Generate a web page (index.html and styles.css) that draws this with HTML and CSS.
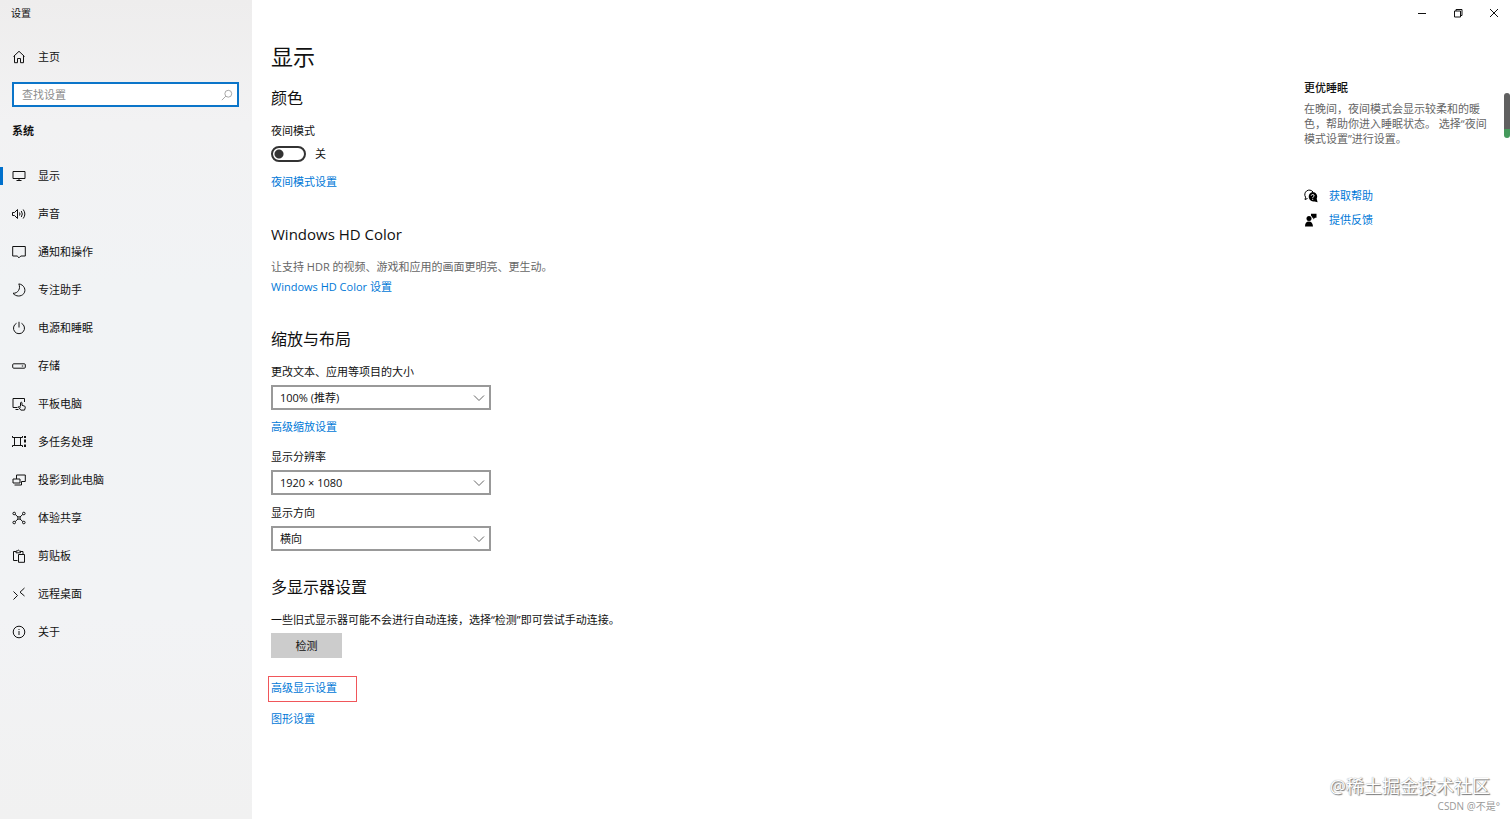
FILE: index.html
```html
<!DOCTYPE html>
<html lang="zh-CN">
<head>
  <meta charset="UTF-8" />
  <meta name="viewport" content="width=device-width, initial-scale=1.0" />
  <title>设置</title>
  <link rel="stylesheet" href="styles.css">
</head>
<body>
  <div class="window">
    <!-- Left navigation -->
    <aside class="sidebar">
      <div class="app-title">设置</div>
      <a class="nav-link home" href="#">
        <svg class="icon" viewBox="0 0 14 14"><path d="M1.500 6.500 7 1.300l5.500 5.200M2.500 5.700v7h3V8.500h3v4.200h3v-7"/></svg>
        主页
      </a>
      <form class="search">
        <input type="search" aria-label="查找设置" placeholder="查找设置" />
        <button type="button" aria-label="搜索">
          <svg class="icon" viewBox="0 0 14 14"><circle cx="8.500" cy="5.500" r="4"/><path d="M5.700 8.300l-4.700 4.700"/></svg>
        </button>
      </form>
      <h2 class="group-title">系统</h2>
      <nav class="nav">
        <a class="nav-link active" href="#">
          <svg class="icon" viewBox="0 0 14 14"><path d="M1 2.500h12v7H1zM7 9.500v2M4.500 11.500h5"/></svg>
          显示
        </a>
        <a class="nav-link" href="#">
          <svg class="icon" viewBox="0 0 14 14"><path d="M.5 5.500h2L5.500 2.500v9l-3-3h-2zM7.500 5.500q1 1.500 0 3M9.300 4q2 3 0 6M11.200 2.500q3.300 4.500 0 9"/></svg>
          声音
        </a>
        <a class="nav-link" href="#">
          <svg class="icon" viewBox="0 0 14 14"><path d="M.7 1.500h12.600v9.500H8.800L7 12.800 5.200 11H.7z"/></svg>
          通知和操作
        </a>
        <a class="nav-link" href="#">
          <svg class="icon" viewBox="0 0 14 14"><path d="M6.800.9C12 1.500 14.500 7 11.800 10.600 9 14 3.800 13.700 1 10.300 6 10.500 9 5.500 6.800.9z"/></svg>
          专注助手
        </a>
        <a class="nav-link" href="#">
          <svg class="icon" viewBox="0 0 14 14"><path d="M7 .8v5.700M4.500 2.300a5.500 5.500 0 1 0 5 0"/></svg>
          电源和睡眠
        </a>
        <a class="nav-link" href="#">
          <svg class="icon" viewBox="0 0 14 14"><rect x=".7" y="4.800" width="12.600" height="4.400" rx="1"/><path d="M9.800 7h1.400"/></svg>
          存储
        </a>
        <a class="nav-link" href="#">
          <svg class="icon" viewBox="0 0 14 14"><path d="M5.500 10.500H1v-9h11.500V5M3.500 12.500h3M8.500 9.500V5.700q.8-1 1.500 0v2.600l2.800.9q.7.500.4 1.700l-.7 2.200H8.800L6.300 9.800q.7-1 2.200.7"/></svg>
          平板电脑
        </a>
        <a class="nav-link" href="#">
          <svg class="icon" viewBox="0 0 14 14"><path d="M2.500 2.500v8M8.500 2.500v8M.5 2.500h10M.5 10.500h10M.5 1v1.500M10.500 1v1.500M.5 10.500V12M10.500 10.500V12"/><path class="thick" d="M13 1v2M13 4.500v3M13 9.500v2.500"/></svg>
          多任务处理
        </a>
        <a class="nav-link" href="#">
          <svg class="icon" viewBox="0 0 14 14"><path d="M4.500 6V2h8.800v6.500H9.500M1 6h7v4H1zM2.500 12h7V8.500"/></svg>
          投影到此电脑
        </a>
        <a class="nav-link" href="#">
          <svg class="icon" viewBox="0 0 14 14"><path d="M3.200 3.400 6 6M10.800 3.400 8 6M3.200 10.600 6 8M10.800 10.600 8 8"/><circle cx="2.200" cy="2.500" r="1.300"/><circle cx="11.800" cy="2.500" r="1.300"/><circle cx="2.200" cy="11.500" r="1.300"/><circle cx="11.800" cy="11.500" r="1.300"/><circle cx="7" cy="7" r="1.300"/></svg>
          体验共享
        </a>
        <a class="nav-link" href="#">
          <svg class="icon" viewBox="0 0 14 14"><path d="M5.500 11.500h-4v-9H4M8.500 2.500H11V5M4 3.800V2h1.200q1-2 2.100 0h1.200v1.800zM6.500 5.500h6v7.800h-6z"/></svg>
          剪贴板
        </a>
        <a class="nav-link" href="#">
          <svg class="icon" viewBox="0 0 14 14"><path d="M1.500 4.500l4 4-4 4M12.500 1l-4.500 4.200L12.500 9"/></svg>
          远程桌面
        </a>
        <a class="nav-link" href="#">
          <svg class="icon" viewBox="0 0 14 14"><circle cx="7" cy="7" r="5.800"/><path d="M7 6v4M7 4v1"/></svg>
          关于
        </a>
      </nav>
    </aside>

    <div class="page">
      <div class="window-buttons">
        <button type="button" aria-label="最小化"><svg viewBox="0 0 10 10"><path d="M1 5.500h8"/></svg></button>
        <button type="button" aria-label="还原"><svg viewBox="0 0 10 10"><path d="M1.500 3h6v6h-6zM3 3V1.500h6v6H7.500"/></svg></button>
        <button type="button" aria-label="关闭"><svg viewBox="0 0 10 10"><path d="M1 1l8 8M9 1L1 9"/></svg></button>
      </div>

      <div class="columns">
        <main class="content">
          <h1>显示</h1>

          <section>
            <h2>颜色</h2>
            <label for="night">夜间模式</label>
            <div class="toggle">
              <input type="checkbox" id="night" />
              <span>关</span>
            </div>
            <a class="link" href="#">夜间模式设置</a>
          </section>

          <section>
            <h2 class="latin">Windows HD Color</h2>
            <p class="hint">让支持 HDR 的视频、游戏和应用的画面更明亮、更生动。</p>
            <a class="link" href="#">Windows HD Color 设置</a>
          </section>

          <section>
            <h2>缩放与布局</h2>
            <div class="field">
              <label for="scale">更改文本、应用等项目的大小</label>
              <div class="select">
                <select id="scale"><option>100% (推荐)</option></select>
                <svg viewBox="0 0 12 8"><path d="M1 1.500l5 5 5-5"/></svg>
              </div>
              <a class="link" href="#">高级缩放设置</a>
            </div>
            <div class="field">
              <label for="resolution">显示分辨率</label>
              <div class="select">
                <select id="resolution"><option>1920 × 1080</option></select>
                <svg viewBox="0 0 12 8"><path d="M1 1.500l5 5 5-5"/></svg>
              </div>
            </div>
            <div class="field">
              <label for="orientation">显示方向</label>
              <div class="select">
                <select id="orientation"><option>横向</option></select>
                <svg viewBox="0 0 12 8"><path d="M1 1.500l5 5 5-5"/></svg>
              </div>
            </div>
          </section>

          <section class="displays">
            <h2>多显示器设置</h2>
            <p>一些旧式显示器可能不会进行自动连接，选择“检测”即可尝试手动连接。</p>
            <button class="detect" type="button">检测</button>
            <a class="link marked" href="#">高级显示设置</a>
            <a class="link" href="#">图形设置</a>
          </section>
        </main>

        <aside class="help">
          <h3>更优睡眠</h3>
          <p>在晚间，夜间模式会显示较柔和的暖色，帮助你进入睡眠状态。 选择“夜间模式设置”进行设置。</p>
          <a class="help-link" href="#">
            <svg viewBox="0 0 14 14"><path class="outline" d="M3.500 9.500 1 10.500l.6-2.300A4.300 4.300 0 1 1 9 3"/><path d="M8.500 3a4.600 4.600 0 0 1 4.200 6.700l.9 3.600-3-.9A4.700 4.700 0 1 1 8.500 3z"/><path class="question" d="M7.200 6.700q.2-1.200 1.500-1.200 1.500.1 1.400 1.300-.1.700-.8 1.100-.6.400-.6 1M8.700 9.800v1"/></svg>
            获取帮助
          </a>
          <a class="help-link" href="#">
            <svg viewBox="0 0 14 14"><circle cx="5" cy="5.500" r="2.500"/><path d="M1 13.500q0-5 4-5 3.500 0 4 5zM7 .8h5.500v4H11L9.300 6.500V4.800H8.300Q8 3.500 7 2.800z"/></svg>
            提供反馈
          </a>
        </aside>
      </div>
    </div>

    <div class="scroll-thumb"></div>
    <div class="watermark">@稀土掘金技术社区</div>
    <div class="credit">CSDN @不是°</div>
  </div>
</body>
</html>
```
FILE: styles.css
```css
* {
  box-sizing: border-box;
}
body {
  margin: 0;
  font-family: "Open Sans", "Noto Sans CJK SC", sans-serif;
  font-size: 11px;
  line-height: 16px;
  color: #111;
  background: #fff;
}
h1, h2, h3, p {
  margin: 0;
  font-weight: normal;
}
a {
  text-decoration: none;
}
button, input, select {
  font: inherit;
  color: inherit;
}
svg {
  fill: none;
  stroke: currentColor;
}
.window {
  position: relative;
  display: flex;
  min-height: 100vh;
}

/* Left navigation */
.sidebar {
  width: 252px;
  flex-shrink: 0;
  background: linear-gradient(#eeeded, #f2f2f3 15%, #f1f3f5 35%, #f2f3f5 75%, #f1f1f1);
}
.app-title {
  padding: 5px 11px;
  font-size: 10px;
}
.nav-link {
  display: flex;
  align-items: center;
  gap: 12px;
  height: 38px;
  padding-left: 12px;
  color: #111;
}
.nav-link.active {
  background: linear-gradient(#0070cc, #0070cc) left center / 3px 18px no-repeat;
}
.icon {
  width: 14px;
  height: 14px;
  flex-shrink: 0;
}
.thick {
  stroke-width: 2;
}
.home {
  margin-top: 12px;
}
.search {
  display: flex;
  height: 25px;
  margin: 6px 13px 0 12px;
  border: 2px solid #0b75c9;
  background: #fff;
}
.search input {
  flex: 1;
  min-width: 0;
  padding: 0 8px;
  border: 0;
  outline: 0;
  background: none;
}
.search input::placeholder {
  color: #8d8d8d;
}
.search button {
  display: flex;
  align-items: center;
  padding: 0 4px;
  border: 0;
  background: none;
  color: #999;
}
.search .icon {
  width: 12px;
  height: 12px;
}
.group-title {
  margin: 16px 12px 18px;
  font-size: 11px;
  font-weight: bold;
}

/* Main area */
.page {
  flex: 1;
  min-width: 0;
}
.window-buttons {
  display: flex;
  justify-content: flex-end;
  height: 26px;
}
.window-buttons button {
  display: flex;
  align-items: center;
  justify-content: center;
  width: 36px;
  padding: 0;
  border: 0;
  background: none;
}
.window-buttons svg {
  width: 10px;
  height: 10px;
}
.columns {
  display: flex;
  justify-content: space-between;
  padding: 14px 20px 0 19px;
}
h1 {
  margin-bottom: 14px;
  font-size: 22px;
  line-height: 32px;
}
.content h2 {
  margin: 13px 0;
  font-size: 16px;
  line-height: 24px;
}
.content .latin {
  font-size: 15px;
}
.content label,
.content .link {
  display: block;
  width: fit-content;
}
.content section + section h2 {
  margin-top: 32px;
}
.content section.displays h2 {
  margin-top: 24px;
}
.link,
.help-link {
  color: #0078d7;
}
.toggle {
  display: flex;
  align-items: center;
  gap: 9px;
  margin: 7px 0 12px;
}
.toggle input {
  appearance: none;
  width: 35px;
  height: 16px;
  margin: 0;
  border: 2px solid #333;
  border-radius: 8px;
  background: radial-gradient(circle at 6px 6px, #333 4px, transparent 5px);
}
.hint {
  margin-bottom: 4px;
  color: #666;
}
.field {
  margin-bottom: 10px;
}
.field .link {
  margin: 9px 0 14px;
}
.select {
  position: relative;
  width: 220px;
  margin-top: 5px;
}
.select select {
  appearance: none;
  display: block;
  width: 100%;
  height: 25px;
  padding: 0 7px;
  border: 2px solid #999;
  border-radius: 0;
  background: #fff;
}
.select svg {
  position: absolute;
  top: 9px;
  right: 6px;
  width: 12px;
  height: 8px;
  color: #666;
  pointer-events: none;
}
.detect {
  display: block;
  width: 71px;
  height: 25px;
  margin: 5px 0 18px;
  padding: 0;
  border: 0;
  background: #ccc;
}
.content .marked {
  width: 89px;
  margin: 0 0 9px -3px;
  padding: 3px 2px 5px;
  border: 1px solid #f0565a;
}

/* Help column */
.help {
  width: 188px;
  padding-top: 40px;
}
.help h3 {
  font-size: 11px;
  font-weight: 500;
}
.help p {
  margin: 5px 0 42px;
  line-height: 15px;
  color: #666;
}
.help-link {
  display: flex;
  align-items: center;
  gap: 11px;
  margin-bottom: 8px;
}
.help-link svg {
  width: 14px;
  height: 14px;
  fill: #000;
  stroke: none;
}
.help-link .outline {
  fill: none;
  stroke: #000;
}
.help-link .question {
  fill: none;
  stroke: #fff;
}

/* Overlays */
.scroll-thumb {
  position: absolute;
  top: 93px;
  right: 2px;
  width: 6px;
  height: 45px;
  border-radius: 3px;
  background: linear-gradient(#606060 80%, #459a5c 80%);
}
.watermark,
.credit {
  position: absolute;
  color: #999;
}
.watermark {
  right: 22px;
  bottom: 21px;
  font-size: 18px;
  line-height: 24px;
  color: #fff;
  text-shadow: 1px 1px 1px #777, 0 0 1px #888;
}
.credit {
  right: 12px;
  bottom: 5px;
  font-size: 10px;
}
```
